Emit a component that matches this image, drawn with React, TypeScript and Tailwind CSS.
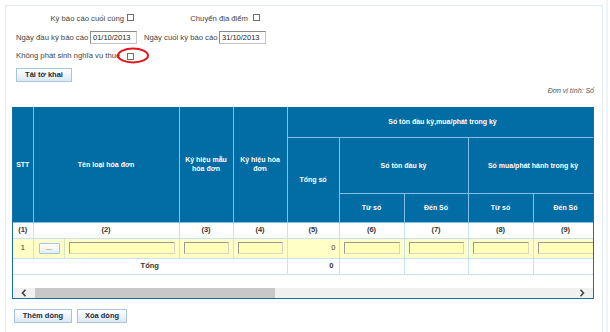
import React from "react";

const Cb = () => <span className="inline-block w-[7px] h-[7px] border border-[#6f6f6f] bg-white shrink-0" />;

const DateInput = ({ v }: { v: string }) => (
  <div className="w-[47px] h-[13px] border border-[#8a8a8a] border-b-[#c4c4c4] border-r-[#c4c4c4] bg-white text-[7.5px] leading-[11px] pl-[2px] text-[#222]">{v}</div>
);

const YInput = () => (
  <div className="w-full h-[12px] bg-[#ffffb8] border border-[#9a9a9a] border-b-[#d8d8c0] border-r-[#d8d8c0]" />
);

const Btn = ({ label, w }: { label: string; w: string }) => (
  <div className={`${w} h-[14px] flex items-center justify-center border border-[#a9c4dd] bg-gradient-to-b from-white to-[#dbe7f3] text-[7.5px] font-bold text-[#1d2a3a]`}>{label}</div>
);

const H = "border border-[#7ec0ea] text-white font-bold text-[7px] leading-[9px] text-center align-middle px-[2px]";
const B = "border border-[#c8e1f5] text-[7.5px] text-center align-middle text-[#333]";

const Chev = ({ dir }: { dir: "l" | "r" }) => (
  <svg width="6" height="8" viewBox="0 0 6 8">
    <polyline points={dir === "l" ? "4.5,0.8 1.5,4 4.5,7.2" : "1.5,0.8 4.5,4 1.5,7.2"} fill="none" stroke="#444" strokeWidth="1.6" />
  </svg>
);

export default function App() {
  return (
    <div className="w-[610px] h-[332px] overflow-hidden bg-white flex font-['Liberation_Sans',Arial,sans-serif] text-[#444]">
      <div className="ml-[5px] mt-[5px] w-[598px] h-[330px] border-l border-t border-r border-[#e2eaf2] relative">
        {/* row 1 */}
        <div className="mt-[7px] h-[12px] flex items-center text-[7.7px]">
          <div className="w-[118px] text-right whitespace-nowrap">Kỳ báo cáo cuối cùng</div>
          <div className="ml-[3px]"><Cb /></div>
          <div className="ml-[4px] w-[110px] text-right whitespace-nowrap">Chuyển địa điểm</div>
          <div className="ml-[5px]"><Cb /></div>
        </div>
        {/* row 2 */}
        <div className="mt-[6px] h-[13px] flex items-center text-[7.7px] pl-[10px]">
          <div className="w-[74px] whitespace-nowrap">Ngày đầu kỳ báo cáo</div>
          <DateInput v="01/10/2013" />
          <div className="ml-[7px] w-[75px] whitespace-nowrap">Ngày cuối kỳ báo cáo</div>
          <DateInput v="31/10/2013" />
        </div>
        {/* row 3 */}
        <div className="mt-[6px] h-[12px] flex items-center text-[7.7px] pl-[10px]">
          <div className="w-[111px] whitespace-nowrap">Không phát sinh nghĩa vụ thuế</div>
          <div className="flex items-center"><Cb /></div>
        </div>
        <svg className="absolute left-[110px] top-[41px]" width="34" height="18" viewBox="0 0 34 18">
          <ellipse cx="17" cy="8.5" rx="15" ry="7" fill="none" stroke="#e3141b" strokeWidth="2" />
        </svg>
        {/* button */}
        <div className="mt-[6px] pl-[10px]">
          <Btn label="Tải tờ khai" w="w-[56px]" />
        </div>
        <div className="mt-[4px] h-[10px] pr-[8px] text-right italic text-[7px] leading-[10px] text-[#555]">Đơn vị tính: Số</div>
        {/* table */}
        <div className="mt-[11px] ml-[6px] w-[582px] border-l border-r border-b border-[#176ea8] overflow-hidden">
          <table className="table-fixed border-collapse w-[585px]">
            <colgroup>
              <col className="w-[20px]" />
              <col className="w-[146px]" />
              <col className="w-[54px]" />
              <col className="w-[54px]" />
              <col className="w-[52px]" />
              <col className="w-[65px]" />
              <col className="w-[64px]" />
              <col className="w-[65px]" />
              <col className="w-[65px]" />
            </colgroup>
            <thead className="bg-[#026ca4]">
              <tr className="h-[30px]">
                <th rowSpan={3} className={`${H} border-l-0 border-t-0`}>STT</th>
                <th rowSpan={3} className={`${H} border-t-0`}>Tên loại hóa đơn</th>
                <th rowSpan={3} className={`${H} border-t-0`}>Ký hiệu mẫu hóa đơn</th>
                <th rowSpan={3} className={`${H} border-t-0`}>Ký hiệu hóa đơn</th>
                <th colSpan={5} className={`${H} border-t-0`}>Số tồn đầu kỳ,mua/phát trong kỳ</th>
              </tr>
              <tr className="h-[56px]">
                <th rowSpan={2} className={H}>Tổng số</th>
                <th colSpan={2} className={H}>Số tồn đầu kỳ</th>
                <th colSpan={2} className={H}>Số mua/phát hành trong kỳ</th>
              </tr>
              <tr className="h-[29px]">
                <th className={H}>Từ số</th>
                <th className={H}>Đến Số</th>
                <th className={H}>Từ số</th>
                <th className={H}>Đến Số</th>
              </tr>
            </thead>
            <tbody>
              <tr className="h-[16px] bg-white">
                {["(1)", "(2)", "(3)", "(4)", "(5)", "(6)", "(7)", "(8)", "(9)"].map((t, i) => (
                  <td key={t} className={`${B} font-bold ${i === 0 ? "border-l-0" : ""}`}>{t}</td>
                ))}
              </tr>
              <tr className="h-[20px] bg-[#ffffc6]">
                <td className={`${B} border-l-0`}>1</td>
                <td className={`${B} p-0`}>
                  <div className="flex h-[19px] items-center">
                    <div className="w-[30px] h-full flex items-center pl-[5px]">
                      <div className="w-[21px] h-[11px] border border-[#9fc6e2] rounded-[1px] bg-gradient-to-b from-white to-[#e3eef8] text-[7px] leading-[7px] text-center text-[#333]">...</div>
                    </div>
                    <div className="flex-1 h-full flex items-center border-l border-[#d5e6c8] pl-[4px] pr-[4px]">
                      <YInput />
                    </div>
                  </div>
                </td>
                <td className={`${B} px-[4px]`}><YInput /></td>
                <td className={`${B} px-[4px]`}><YInput /></td>
                <td className={`${B} text-right pr-[3px]`}>0</td>
                <td className={`${B} px-[4px]`}><YInput /></td>
                <td className={`${B} px-[4px]`}><YInput /></td>
                <td className={`${B} px-[4px]`}><YInput /></td>
                <td className={`${B} px-[4px]`}><YInput /></td>
              </tr>
              <tr className="h-[16px] bg-white">
                <td colSpan={4} className={`${B} border-l-0 font-bold`}>Tổng</td>
                <td className={`${B} text-right pr-[5px] font-bold`}>0</td>
                <td className={B}></td>
                <td className={B}></td>
                <td className={B}></td>
                <td className={B}></td>
              </tr>
            </tbody>
          </table>
          <div className="h-[13px] bg-white" />
          <div className="h-[10px] bg-[#f0f0f0] flex items-center">
            <div className="w-[22px] flex justify-center"><Chev dir="l" /></div>
            <div className="w-[240px] h-full bg-[#c8c8c8]" />
            <div className="flex-1" />
            <div className="w-[22px] flex justify-center"><Chev dir="r" /></div>
          </div>
        </div>
        {/* bottom buttons */}
        <div className="mt-[10px] ml-[8px] flex gap-[5px]">
          <Btn label="Thêm dòng" w="w-[58px]" />
          <Btn label="Xóa dòng" w="w-[50px]" />
        </div>
      </div>
      <div className="ml-[3px] w-[2px] h-full bg-[#f1f4f7]" />
    </div>
  );
}
